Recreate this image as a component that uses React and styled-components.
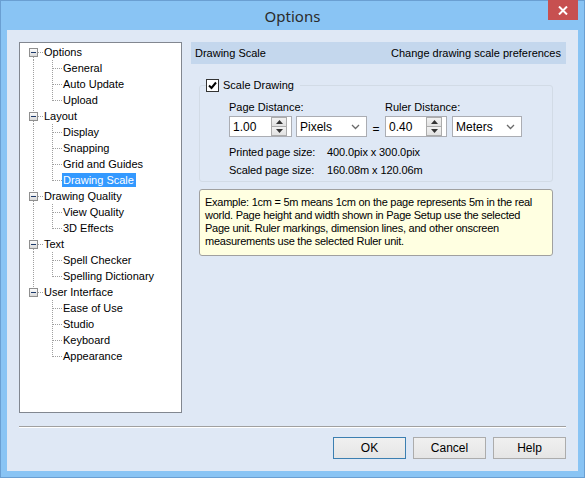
import React from 'react'
import styled, { createGlobalStyle } from 'styled-components'

// global
const GlobalStyle = createGlobalStyle`
  html, body {
    margin: 0;
    padding: 0;
    background: #89c4f4;
  }
  body {
    font-family: "Liberation Sans", Arial, sans-serif;
    font-size: 11px;
    color: #000;
  }
  * { box-sizing: border-box; }
`

// window frame
const Window = styled.div`
  width: 585px;
  height: 478px;
  display: flex;
  flex-direction: column;
  border: 1px solid #6a9fd2;
  background: #89c4f4;
  padding: 0 6px 6px 6px;
`

const TitleBar = styled.div`
  height: 29px;
  display: grid;
  grid-template-columns: 30px 1fr 30px;
  align-items: start;
`

const Title = styled.div`
  grid-column: 2;
  align-self: center;
  text-align: center;
  font-family: "Noto Sans", "Open Sans", sans-serif;
  font-size: 15px;
  color: #2b2b2b;
  padding-top: 1px;
`

const CloseButton = styled.div`
  grid-column: 3;
  height: 20px;
  margin-top: -1px;
  background: #c75050;
  display: flex;
  align-items: center;
  justify-content: center;
`

const Client = styled.div`
  flex: 1;
  display: flex;
  flex-direction: column;
  background: #dfe8f5;
  padding: 12px;
`

const Main = styled.div`
  height: 371px;
  display: flex;
  gap: 9px;
`

// tree
const TreePanel = styled.div`
  flex: none;
  width: 163px;
  background: #fff;
  border: 1px solid #828790;
  padding-top: 1px;
`

const TreeRow = styled.div`
  height: 16px;
  display: flex;
  align-items: center;
  white-space: nowrap;
`

const TreeLabel = styled.span`
  line-height: 14px;
  padding: 0 2px 0 ${p => (p.$selected ? '1px' : '0')};
  margin-left: ${p => (p.$selected ? '-1px' : '0')};
  background: ${p => (p.$selected ? '#3399ff' : 'transparent')};
  color: ${p => (p.$selected ? '#fff' : '#000')};
`

const dot = { stroke: '#a0a0a0', strokeWidth: 1, strokeDasharray: '1 1' }

const RootGlyph = ({ first, last }) => (
  <svg width="24" height="16" style={{ display: 'block', flex: 'none' }}>
    {!first && <line x1="13.5" y1="0" x2="13.5" y2="4" {...dot} />}
    {!last && <line x1="13.5" y1="13" x2="13.5" y2="16" {...dot} />}
    <defs>
      <linearGradient id="bx" x1="0" y1="0" x2="0" y2="1">
        <stop offset="0" stopColor="#fff" />
        <stop offset="1" stopColor="#d6d6d6" />
      </linearGradient>
    </defs>
    <rect x="9.5" y="4.5" width="8" height="8" fill="url(#bx)" stroke="#8f8f8f" />
    <line x1="11" y1="8.5" x2="16" y2="8.5" stroke="#1d3a6a" />
    <line x1="18" y1="8.5" x2="23" y2="8.5" {...dot} />
  </svg>
)

const ChildGlyph = ({ rootLine, lastChild }) => (
  <svg width="43" height="16" style={{ display: 'block', flex: 'none' }}>
    {rootLine && <line x1="13.5" y1="0" x2="13.5" y2="16" {...dot} />}
    <line x1="32.5" y1="0" x2="32.5" y2={lastChild ? 9 : 16} {...dot} />
    <line x1="33" y1="8.5" x2="42" y2="8.5" {...dot} />
  </svg>
)

const tree = [
  { label: 'Options', children: ['General', 'Auto Update', 'Upload'] },
  { label: 'Layout', children: ['Display', 'Snapping', 'Grid and Guides', 'Drawing Scale'] },
  { label: 'Drawing Quality', children: ['View Quality', '3D Effects'] },
  { label: 'Text', children: ['Spell Checker', 'Spelling Dictionary'] },
  { label: 'User Interface', children: ['Ease of Use', 'Studio', 'Keyboard', 'Appearance'] },
]

const Tree = ({ selected }) => (
  <TreePanel>
    {tree.map((node, i) => {
      const lastRoot = i === tree.length - 1
      return (
        <React.Fragment key={node.label}>
          <TreeRow>
            <RootGlyph first={i === 0} last={lastRoot} />
            <TreeLabel>{node.label}</TreeLabel>
          </TreeRow>
          {node.children.map((c, j) => (
            <TreeRow key={c}>
              <ChildGlyph rootLine={!lastRoot} lastChild={j === node.children.length - 1} />
              <TreeLabel $selected={c === selected}>{c}</TreeLabel>
            </TreeRow>
          ))}
        </React.Fragment>
      )
    })}
  </TreePanel>
)

// right pane
const Pane = styled.div`
  flex: 1;
  min-width: 0;
  display: flex;
  flex-direction: column;
`

const PaneHeader = styled.div`
  height: 22px;
  background: #c4d7ed;
  display: flex;
  align-items: center;
  justify-content: space-between;
  padding: 0 5px 0 4px;
`

const Group = styled.fieldset`
  margin: 15px 13px 0 8px;
  padding: 0 0 2px 6px;
  border: 1px solid #d2dbe6;
  border-radius: 3px;
  min-width: 0;
`

const Legend = styled.legend`
  padding: 0 6px 0 0;
  display: flex;
  align-items: center;
  gap: 4px;
  line-height: 13px;
`

const CheckBox = styled.span`
  width: 13px;
  height: 13px;
  background: #fff;
  border: 1px solid #333;
  display: flex;
  align-items: center;
  justify-content: center;
`

const GroupBody = styled.div`
  padding-left: 23px;
`

const LabelRow = styled.div`
  display: flex;
  margin-top: 8px;
  line-height: 14px;
`

const LabelCell = styled.div`
  width: ${p => p.$w}px;
`

const InputRow = styled.div`
  display: flex;
  align-items: center;
  margin-top: 2px;
  height: 21px;
`

const SpinBox = styled.div`
  width: ${p => p.$w}px;
  height: 21px;
  background: #fff;
  border: 1px solid #abadb3;
  display: flex;
  align-items: center;
  padding: 0 4px 0 3px;
`

const SpinValue = styled.span`
  flex: 1;
  font-size: 12px;
`

const SpinButtons = styled.div`
  width: 16px;
  height: 19px;
  display: flex;
  flex-direction: column;
`

const SpinHalf = styled.div`
  flex: 1;
  border: 1px solid #acacac;
  background: linear-gradient(#f2f2f2, #e2e2e2);
  display: flex;
  align-items: center;
  justify-content: center;
  & + & { border-top: none; }
`

const Arrow = ({ up }) => (
  <svg width="7" height="4" style={{ display: 'block' }}>
    <path d={up ? 'M0 4 L3.5 0 L7 4 Z' : 'M0 0 L3.5 4 L7 0 Z'} fill="#333" />
  </svg>
)

const Select = styled.div`
  width: ${p => p.$w}px;
  height: 21px;
  margin-left: ${p => p.$ml}px;
  background: #fff;
  border: 1px solid #abadb3;
  display: flex;
  align-items: center;
  justify-content: space-between;
  padding: 0 6px 0 3px;
  font-size: 12px;
`

const Equals = styled.span`
  width: 18px;
  text-align: center;
  font-size: 12px;
  padding-top: 4px;
`

const Chevron = () => (
  <svg width="9" height="6" style={{ display: 'block' }}>
    <path d="M1 1 L4.5 4.5 L8 1" fill="none" stroke="#6a6a6a" strokeWidth="1.3" />
  </svg>
)

const InfoRows = styled.div`
  margin-top: 6px;
`

const InfoRow = styled.div`
  display: flex;
  line-height: 18px;
  font-size: 11px;
  letter-spacing: -0.1px;
`

const InfoLabel = styled.span`
  width: 98px;
`

const Note = styled.div`
  margin: 7px 13px 0 8px;
  background: #ffffe1;
  border: 1px solid #a0a0a0;
  border-radius: 3px;
  padding: 6px 8px 7px 5px;
  line-height: 13px;
  font-size: 11px;
  letter-spacing: -0.25px;
  white-space: nowrap;
  overflow: hidden;
`

const Spin = ({ value, w }) => (
  <SpinBox $w={w}>
    <SpinValue>{value}</SpinValue>
    <SpinButtons>
      <SpinHalf><Arrow up /></SpinHalf>
      <SpinHalf><Arrow /></SpinHalf>
    </SpinButtons>
  </SpinBox>
)

// footer
const Separator = styled.div`
  margin-top: 13px;
  height: 2px;
  border-top: 1px solid #a0a0a0;
  border-bottom: 1px solid #fff;
`

const Buttons = styled.div`
  margin-top: 9px;
  display: flex;
  justify-content: flex-end;
  gap: 7px;
`

const Button = styled.button`
  width: 73px;
  height: 22px;
  font-family: "Liberation Sans", Arial, sans-serif;
  font-size: 12px;
  color: #000;
  background: linear-gradient(#f0f0f0, #e5e5e5);
  border: 1px solid ${p => (p.$default ? '#3c7fb1' : '#acacac')};
  padding: 0;
`

//render
const App = () => (
  <>
    <GlobalStyle />
    <Window>
      <TitleBar>
        <Title>Options</Title>
        <CloseButton>
          <svg width="10" height="9">
            <path d="M1 0.5 L9 8.5 M9 0.5 L1 8.5" stroke="#fff" strokeWidth="2" />
          </svg>
        </CloseButton>
      </TitleBar>
      <Client>
        <Main>
          <Tree selected="Drawing Scale" />
          <Pane>
            <PaneHeader>
              <span>Drawing Scale</span>
              <span>Change drawing scale preferences</span>
            </PaneHeader>
            <Group>
              <Legend>
                <CheckBox>
                  <svg width="9" height="9">
                    <path d="M1 4.5 L3.5 7 L8 1.5" fill="none" stroke="#000" strokeWidth="2" />
                  </svg>
                </CheckBox>
                Scale Drawing
              </Legend>
              <GroupBody>
                <LabelRow>
                  <LabelCell $w={156}>Page Distance:</LabelCell>
                  <LabelCell>Ruler Distance:</LabelCell>
                </LabelRow>
                <InputRow>
                  <Spin value="1.00" w={63} />
                  <Select $w={71} $ml={4}>Pixels<Chevron /></Select>
                  <Equals>=</Equals>
                  <Spin value="0.40" w={62} />
                  <Select $w={70} $ml={5}>Meters<Chevron /></Select>
                </InputRow>
                <InfoRows>
                  <InfoRow>
                    <InfoLabel>Printed page size:</InfoLabel>
                    <span>400.0pix x 300.0pix</span>
                  </InfoRow>
                  <InfoRow>
                    <InfoLabel>Scaled page size:</InfoLabel>
                    <span>160.08m x 120.06m</span>
                  </InfoRow>
                </InfoRows>
              </GroupBody>
            </Group>
            <Note>
              Example: 1cm = 5m means 1cm on the page represents 5m in the real<br />
              world. Page height and width shown in Page Setup use the selected<br />
              Page unit. Ruler markings, dimension lines, and other onscreen<br />
              measurements use the selected Ruler unit.
            </Note>
          </Pane>
        </Main>
        <Separator />
        <Buttons>
          <Button $default>OK</Button>
          <Button>Cancel</Button>
          <Button>Help</Button>
        </Buttons>
      </Client>
    </Window>
  </>
)

export default App
